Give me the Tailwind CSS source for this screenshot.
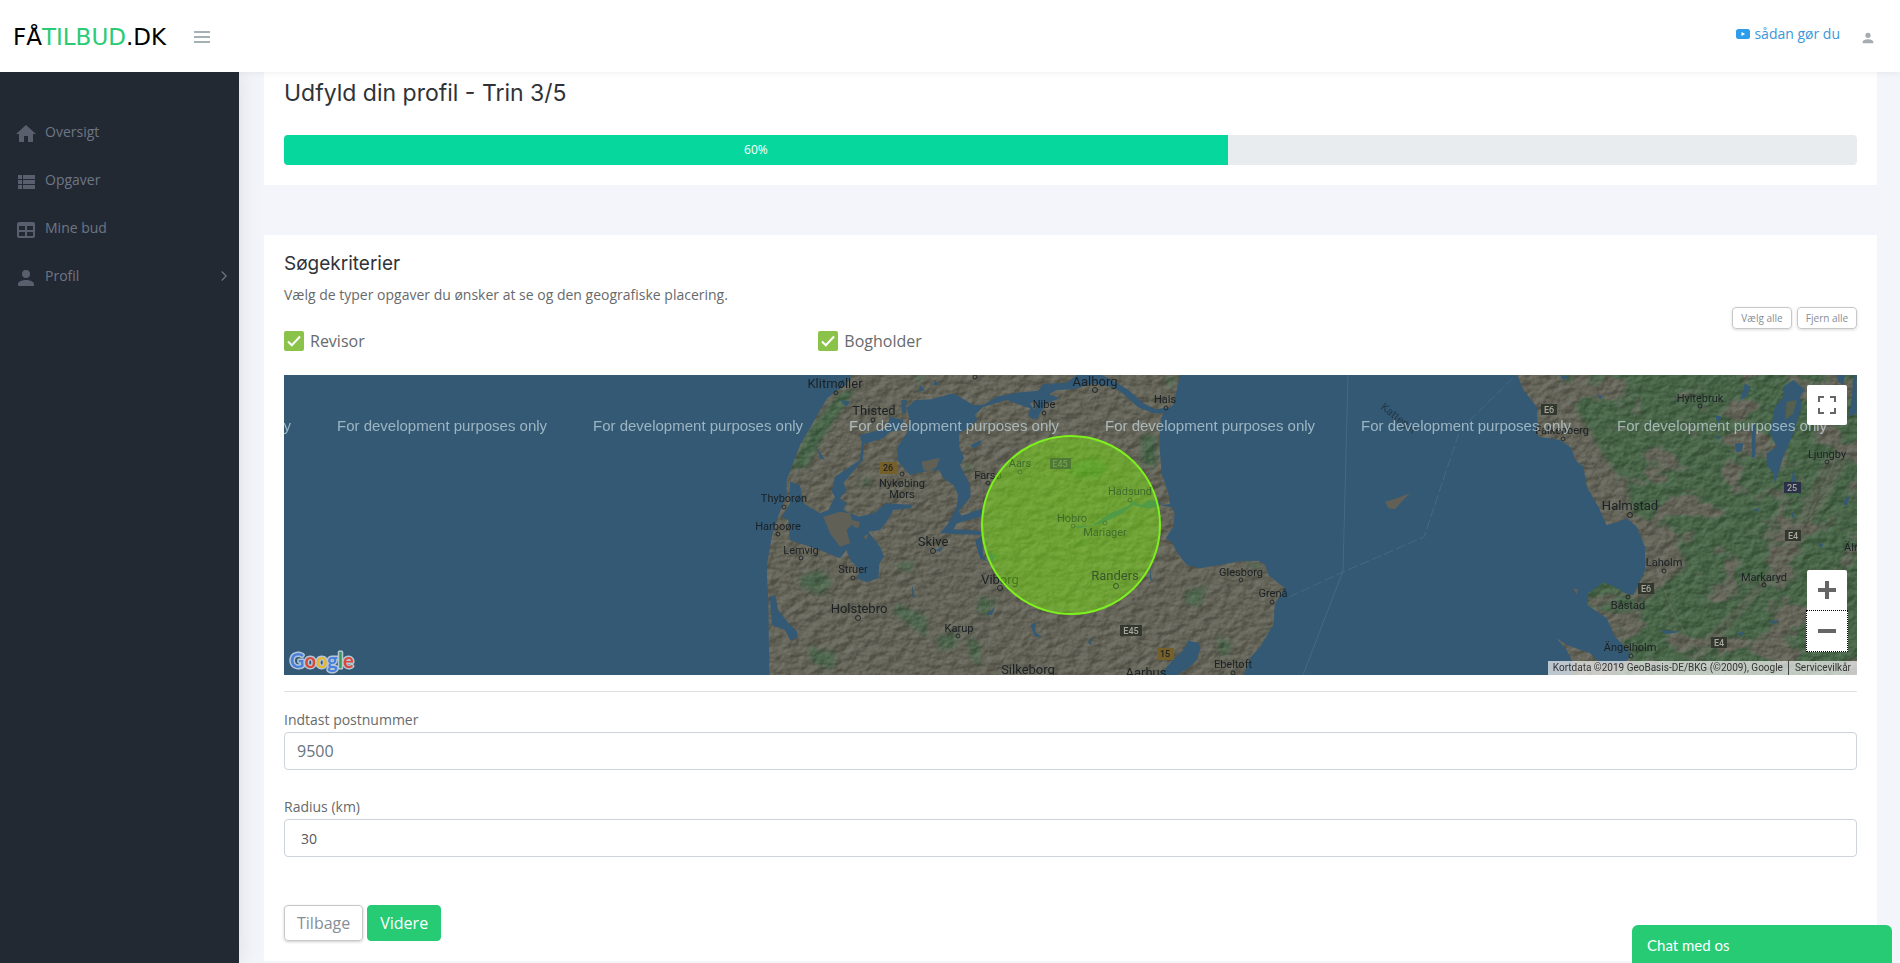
<!DOCTYPE html>
<html lang="da">
<head>
    <meta charset="UTF-8">
    <meta name="viewport" content="width=device-width, initial-scale=1.0">
    <title>FåTilbud.dk - Udfyld din profil</title>
    <script src="https://cdn.jsdelivr.net/npm/@tailwindcss/browser@4"></script>
</head>
<body class="bg-[#f4f5fa] font-['Open_Sans',sans-serif] text-sm text-[#676a6c] h-screen overflow-hidden flex flex-col">

    <!-- Topbar -->
    <header class="relative z-20 h-[72px] shrink-0 bg-white shadow-[0_1px_6px_rgba(60,70,90,0.08)] flex items-center justify-between pl-[13px] pr-6">
        <div class="flex items-center gap-6 pt-[2px]">
            <a href="#" class="font-['DejaVu_Sans',sans-serif] text-[23px] leading-6 text-black">FÅ<span class="text-[#2bcb75]">TILBUD</span>.DK</a>
            <button type="button" aria-label="Menu" class="w-6 h-6 flex items-center justify-center">
                <svg class="w-4 h-3" viewBox="0 0 16 12" fill="#a3b0b6"><path d="M0 0h16v2H0zM0 5h16v2H0zM0 10h16v2H0z"/></svg>
            </button>
        </div>
        <div class="flex items-center gap-5">
            <a href="#" class="flex items-center gap-1 pb-1 text-[#3c96dc]">
                <svg class="w-[14px] h-[10px]" viewBox="0 0 14 10"><rect width="14" height="10" rx="2.5" fill="#2d9cea"/><path d="M5.5 3v4l3.6-2z" fill="#fff"/></svg>
                sådan gør du
            </a>
            <button type="button" aria-label="Konto" class="pt-1">
                <svg class="w-4 h-4" viewBox="0 0 24 24" fill="#a3adb3"><path d="M12 12a4 4 0 1 0 0-8 4 4 0 0 0 0 8zm0 2c-3 0-8 1.300-8 4v2h16v-2c0-2.700-5-4-8-4z"/></svg>
            </button>
        </div>
    </header>

    <div class="flex flex-1 min-h-0">
        <!-- Sidebar -->
        <nav class="w-[239px] shrink-0 bg-[#222933] text-[#6e7684] pt-9 shadow-[2px_0_20px_rgba(60,70,100,0.12)] z-10">
            <ul>
                <li>
                    <a href="#" class="flex items-center h-12 pl-[14px] gap-[7px]">
                        <svg class="w-6 h-6 mt-1" viewBox="0 0 24 24" fill="#585f6d"><path d="M10 20v-6h4v6h5v-8h3L12 3 2 12h3v8z"/></svg>
                        Oversigt
                    </a>
                </li>
                <li>
                    <a href="#" class="flex items-center h-12 pl-[14px] gap-[7px]">
                        <svg class="w-6 h-6 mt-1" viewBox="0 0 24 24" fill="#585f6d"><path d="M9 5v4h12V5zM9 19h12v-4H9zM9 14h12v-4H9zM4 9h4V5H4zM4 19h4v-4H4zM4 14h4v-4H4z"/></svg>
                        Opgaver
                    </a>
                </li>
                <li>
                    <a href="#" class="flex items-center h-12 pl-[14px] gap-[7px]">
                        <svg class="w-6 h-6 mt-1" viewBox="0 0 24 24" fill="#585f6d" fill-rule="evenodd"><path d="M5 4h14a2 2 0 0 1 2 2v12a2 2 0 0 1-2 2H5a2 2 0 0 1-2-2V6a2 2 0 0 1 2-2zM5 8v4h6V8zM13 8v4h6V8zM5 14v4h6v-4zM13 14v4h6v-4z"/></svg>
                        Mine bud
                    </a>
                </li>
                <li>
                    <a href="#" class="flex items-center h-12 pl-[14px] pr-3 gap-[7px]">
                        <svg class="w-6 h-6 mt-1" viewBox="0 0 24 24" fill="#585f6d"><path d="M12 12a4 4 0 1 0 0-8 4 4 0 0 0 0 8zm0 2c-3 0-8 1.300-8 4v2h16v-2c0-2.700-5-4-8-4z"/></svg>
                        Profil
                        <svg class="w-[6px] h-[10px] ml-auto" viewBox="0 0 6 10" fill="none" stroke="#6e7684" stroke-width="1.300"><path d="M.7.500 5.200 5 .7 9.500"/></svg>
                    </a>
                </li>
            </ul>
        </nav>

        <main class="flex-1 min-w-0 px-[25px] pr-[23px]">
            <!-- Fremskridt -->
            <section class="bg-white px-5 pt-1 pb-5">
                <h1 class="font-[Inter,sans-serif] text-[23px] leading-[34px] text-[#2f3338]">Udfyld din profil - Trin 3/5</h1>
                <div class="mt-[25px] h-[30px] rounded bg-[#e9ecef] overflow-hidden">
                    <div class="h-full bg-[#06d79c] text-white text-xs flex items-center justify-center" style="width: 60%">60%</div>
                </div>
            </section>

            <!-- Søgekriterier -->
            <section class="bg-white mt-[50px] px-5 pt-[17px] pb-5">
                <h2 class="font-[Inter,sans-serif] text-[19px] leading-6 text-[#2f3338]">Søgekriterier</h2>
                <p class="mt-[7px] leading-6">Vælg de typer opgaver du ønsker at se og den geografiske placering.</p>

                <div class="flex justify-end gap-[5px] text-[10px] leading-5 text-[#868e96]">
                    <button type="button" onclick="setAll(true)" class="w-[60px] h-[22px] border border-[#c6c9cc] rounded shadow-[0_1px_3px_rgba(0,0,0,0.15)]">Vælg alle</button>
                    <button type="button" onclick="setAll(false)" class="w-[60px] h-[22px] border border-[#c6c9cc] rounded shadow-[0_1px_3px_rgba(0,0,0,0.15)]">Fjern alle</button>
                </div>

                <div class="grid grid-cols-3 gap-[30px] text-base leading-6 pb-[22px]">
                    <label class="flex items-center gap-[6px]">
                        <span class="relative w-5 h-5">
                            <input type="checkbox" checked class="type-box peer block appearance-none w-5 h-5 rounded-xs border-2 border-[#8a8a8a] checked:border-[#8bc34a] checked:bg-[#8bc34a]">
                            <svg class="absolute inset-0 w-5 h-5 hidden peer-checked:block pointer-events-none" viewBox="0 0 20 20" fill="none" stroke="#fff" stroke-width="2"><path d="M4 10.500 7.800 14.300 16 5.500"/></svg>
                        </span>
                        Revisor
                    </label>
                    <label class="flex items-center gap-[6px]">
                        <span class="relative w-5 h-5">
                            <input type="checkbox" checked class="type-box peer block appearance-none w-5 h-5 rounded-xs border-2 border-[#8a8a8a] checked:border-[#8bc34a] checked:bg-[#8bc34a]">
                            <svg class="absolute inset-0 w-5 h-5 hidden peer-checked:block pointer-events-none" viewBox="0 0 20 20" fill="none" stroke="#fff" stroke-width="2"><path d="M4 10.500 7.800 14.300 16 5.500"/></svg>
                        </span>
                        Bogholder
                    </label>
                </div>

                <!-- Kort -->
                <div class="relative h-[300px] overflow-hidden bg-[#335975]">
                    <svg class="w-full h-full font-[Roboto,sans-serif]" viewBox="0 0 1573 300" preserveAspectRatio="xMidYMid slice" fill="none">
                        <defs>
                            <path id="jutland" d="M335 15 318 45 285 65 262 85 240 120 215 165 180 225 155 290 140 330 140 375 118 430 100 480 90 530 80 590 85 700 88 930H1225L1260 915 1290 880 1330 840 1345 812 1375 818 1382 835 1370 870 1345 895 1310 915V930H1505L1530 865 1560 830 1600 765 1605 700 1635 655 1585 615 1575 585 1555 572 1500 574 1440 585 1380 595 1340 585 1310 545 1295 515 1270 500 1265 520 1280 500 1300 470 1304 430 1296 412 1262 406 1290 402 1285 370 1265 310 1258 220 1262 150 1270 130 1300 105 1310 60 1320 15z"/>
                            <path id="sweden" d="M50 220 70 270 110 320 115 410 180 420 215 445 225 480 250 500 260 560 295 620 320 675 355 665 380 655 410 680 435 740 435 810 415 855 400 885 375 880 345 860 310 847 265 880 262 915 320 955 345 1010 385 1050 390 1075 360 1095 300 1090 270 1060 200 1035 170 1015 200 1050 220 1090 215 1140H1100V220z"/>
                            <clipPath id="land">
                                <use href="#jutland" transform="translate(456 -5) scale(.33333)"/>
                                <use href="#sweden" transform="translate(1216 -75) scale(.33333)"/>
                            </clipPath>
                            <filter id="relief" x="0" y="0" width="100%" height="100%" color-interpolation-filters="sRGB">
                                <feTurbulence type="fractalNoise" baseFrequency=".09 .12" numOctaves="3" seed="7"/>
                                <feColorMatrix values="0 0 0 0 0  0 0 0 0 0  0 0 0 0 0  1 0 0 0 0"/>
                                <feDiffuseLighting surfaceScale="3" lighting-color="#fff"><feDistantLight azimuth="225" elevation="30"/></feDiffuseLighting>
                            </filter>
                            <filter id="forest" x="0" y="0" width="100%" height="100%" color-interpolation-filters="sRGB">
                                <feTurbulence type="fractalNoise" baseFrequency=".025 .035" numOctaves="4" seed="12"/>
                                <feColorMatrix values="0 0 0 0 .27  0 0 0 0 .4  0 0 0 0 .28  7 0 0 0 -2.300"/>
                            </filter>
                            <filter id="soft" color-interpolation-filters="sRGB"><feGaussianBlur stdDeviation="6"/></filter>
                        </defs>

                        <!-- Land og terræn -->
                        <g clip-path="url(#land)">
                            <rect width="1573" height="300" fill="#646459"/>
                            <rect x="1260" width="313" height="300" filter="url(#forest)" opacity=".9"/>
                            <g transform="translate(1216 -75) scale(.33333)" fill="#646459" filter="url(#soft)">
                                <path d="M40 210 190 225 230 330 320 480 380 560 400 640 520 700 560 800 480 860 440 900 340 880 250 900 330 950 400 1090 300 1130 200 1130 150 1000 430 850 420 700 300 690 240 500 100 410z"/>
                                <path d="M980 470 1060 450 900 740 600 1080 560 1080 820 800z" opacity=".6"/>
                            </g>
                            <g transform="translate(456 -5) scale(.33333)" fill="#48664a" filter="url(#soft)">
                                <path d="M300 70 345 60 250 200 200 290 150 300 200 190z"/>
                                <path d="M1205 190 1250 200 1250 290 1205 285z" opacity=".9"/>
                                <g opacity=".8">
                                    <path d="M180 620 240 600 280 640 240 675 180 650zM470 580 520 575 520 600 480 600zM470 700 560 740 560 800 460 730zM680 800 720 820 720 890 690 860zM200 830 290 850 280 900 220 880zM590 800 650 790 650 830 600 840z"/>
                                    <path d="M980 290 1060 260 1110 290 1070 330 990 320zM1340 660 1400 650 1380 710 1335 700zM1430 800 1480 820 1460 860 1440 850zM720 680 770 690 740 740 710 720zM1590 770 1600 740 1560 820zM1270 20 1310 20 1290 60z"/>
                                    <path d="M670 280 700 290 690 310zM360 330 400 330 380 350zM750 540 790 560 760 580zM1000 520 1040 510 1030 530zM1510 580 1560 580 1560 600zM520 20 560 15 540 40z"/>
                                </g>
                            </g>
                            <rect width="1573" height="300" filter="url(#relief)" opacity=".35" class="mix-blend-soft-light"/>
                            <g stroke="#77766c" opacity=".45">
                                <path d="M815 15C800 70 780 110 782 160S810 220 830 260L860 300M484 180C510 210 560 240 580 300M700 100C690 160 720 220 700 300M1255 15C1290 60 1310 100 1345 140S1370 220 1410 270L1440 300M1560 60C1540 120 1500 200 1420 280"/>
                            </g>
                        </g>

                        <!-- Limfjorden, fjorde og søer -->
                        <g transform="translate(456 -5) scale(.33333)" fill="#335975">
                            <path d="M500 115 525 90 575 88 640 70 700 105 730 105 770 80 830 68 895 62 910 42 980 38 1010 15H1085L1130 38 1165 60 1210 100 1245 118 1290 112 1290 130 1240 130 1195 112 1150 72 1120 52 1060 40 1000 58 950 60 905 85 870 100 890 130 880 150 865 135 870 115 800 90 730 110 705 135 712 150 680 178 657 190 658 230 672 265 660 285 690 345 692 380 655 425 665 437 728 415 725 440 650 460 640 478 690 480 728 485 725 495 650 492 600 490 625 460 650 410 655 375 640 345 610 325 598 300 550 305 510 315 475 275 470 235 500 190 510 150z"/>
                            <path d="M450 140 490 150 485 180 450 185 430 205 372 222 368 270 355 285 310 340 320 360 300 385 320 400 310 420 355 440 400 430 440 400 520 405 510 415 460 420 440 455 420 480 385 485 420 530 432 560 418 580 415 625 380 637 350 625 360 600 330 570 320 540 300 565 240 540 150 510 145 450 125 440 150 400 150 335 180 345 190 400 240 430 265 420 285 380 275 365 285 320 330 290 360 270 365 220 360 195 440 175z"/>
                            <path d="M250 440 300 425 330 430 340 460 320 480 330 520 300 530 270 490z" fill="#606057"/>
                            <path d="M335 450 360 455 355 475 340 470zM545 275 600 263 590 290 570 305 550 300zM370 500 385 490 380 510z" fill="#606057"/>
                            <path d="M90 680 105 675 115 720 145 760 172 785 170 805 150 810 135 780 95 765zM232 235 255 270 240 265zM585 30 600 45 580 45zM540 45 555 60 535 65zM485 90 500 90 498 130 485 130zM300 90 330 95 320 110zM690 225 725 210 720 225 700 235zM705 510 725 500 730 560 745 575 720 565zM745 545 765 560 755 580zM585 540 610 530 600 545zM872 765 888 755 885 785 905 800 885 800zM515 640 525 685 518 680zM740 735 765 710 755 735zM1050 800 1055 825 1045 820zM1230 590 1235 630 1255 640 1230 630zM895 60 880 140 890 150 900 130 920 100 960 85z"/>
                            <path d="M1000 470 1060 465 1110 430 1165 408 1180 392 1205 405 1225 390 1250 392 1262 400 1255 412 1215 415 1180 405 1140 435 1080 462 1020 475z"/>
                            <path d="M1935 395 1970 385 2010 370 1995 385 1965 418 1945 415z" fill="#606057"/>
                        </g>
                        <g transform="translate(1216 -75) scale(.33333)" fill="#335975">
                            <path d="M850 260 880 240 915 270 900 290 905 320 880 400 850 470 825 550 820 520 800 495 800 460 830 440 810 400 825 320 850 290z"/>
                            <path d="M860 305 890 300 880 340 855 360z" fill="#55604f"/>
                            <path d="M1010 225 1035 225 1030 255 1015 245zM1045 350 1070 340 1070 225 1060 225 1055 300zM735 250 750 260 740 290 720 300zM645 345 665 350 655 375zM705 430 730 430 725 455 708 455zM755 380 768 370 765 470 755 475zM880 500 888 545 875 550zM1035 595 1050 590 1040 615 1030 615zM875 630 885 655 875 650zM760 628 778 625 770 637zM955 725 970 735 960 745zM480 990 540 995 500 1003zM805 965 840 960 820 972zM180 225 205 230 190 242zM290 285 310 288 300 297zM710 1000 730 995 725 1010zM645 405 660 410 655 420z"/>
                            <path d="M218 865 235 868 230 882z" fill="#606057"/>
                        </g>

                        <!-- Færgeruter -->
                        <g stroke="#54748a" opacity=".6">
                            <path d="M1064 0 1059 196 1019 300"/>
                            <path d="M1005 222 1059 197 1140 162 1176 55 1232 0" stroke-dasharray="10 3"/>
                        </g>

                        <!-- Vejskilte -->
                        <g font-size="9" font-weight="500" text-anchor="middle" fill="#a6a69d">
                            <rect x="836" y="250" width="22" height="11" fill="#33382f"/><text x="847" y="259">E45</text>
                            <rect x="1257" y="29" width="16" height="11" fill="#33382f"/><text x="1265" y="38">E6</text>
                            <rect x="1500" y="107" width="17" height="11" fill="#293048"/><text x="1508" y="116">25</text>
                            <rect x="1501" y="155" width="16" height="11" fill="#33382f"/><text x="1509" y="164">E4</text>
                            <rect x="1354" y="208" width="16" height="11" fill="#33382f"/><text x="1362" y="217">E6</text>
                            <rect x="1427" y="262" width="16" height="11" fill="#33382f"/><text x="1435" y="271">E4</text>
                            <g fill="#222">
                                <rect x="596" y="87" width="17" height="12" fill="#75602a"/><text x="604" y="96">26</text>
                                <rect x="873" y="273" width="17" height="12" fill="#75602a"/><text x="881" y="282">15</text>
                            </g>
                        </g>

                        <!-- Bynavne -->
                        <g fill="#1b2124" text-anchor="middle">
                            <g font-size="13">
                                <text x="551" y="13">Klitmøller</text>
                                <text x="590" y="40">Thisted</text>
                                <text x="811" y="11">Aalborg</text>
                                <text x="649" y="171">Skive</text>
                                <text x="575" y="238">Holstebro</text>
                                <text x="744" y="299">Silkeborg</text>
                                <text x="862" y="302">Aarhus</text>
                                <text x="1346" y="135">Halmstad</text>
                                <text x="716" y="209">Viborg</text>
                            </g>
                            <g font-size="11">
                                <text x="760" y="33">Nibe</text>
                                <text x="881" y="28">Hals</text>
                                <text x="618" y="112">Nykøbing</text>
                                <text x="618" y="123">Mors</text>
                                <text x="500" y="127">Thyborøn</text>
                                <text x="494" y="155">Harboøre</text>
                                <text x="517" y="179">Lemvig</text>
                                <text x="569" y="198">Struer</text>
                                <text x="675" y="257">Karup</text>
                                <text x="704" y="104">Farsø</text>
                                <text x="957" y="201">Glesborg</text>
                                <text x="989" y="222">Grenå</text>
                                <text x="949" y="293">Ebeltoft</text>
                                <text x="1416" y="27">Hyltebruk</text>
                                <text x="1278" y="59">Falkenberg</text>
                                <text x="1543" y="83">Ljungby</text>
                                <text x="1380" y="191">Laholm</text>
                                <text x="1480" y="206">Markaryd</text>
                                <text x="1344" y="234">Båstad</text>
                                <text x="1346" y="276">Ängelholm</text>
                                <text x="1579" y="176">Älmhult</text>
                            </g>
                            <text x="1115" y="47" font-size="11" opacity=".6" transform="rotate(38 1115 43)">Kattegat</text>
                        </g>
                        <g stroke="#22282a" stroke-width="1">
                            <circle cx="552" cy="18" r="2"/><circle cx="589" cy="45" r="2"/><circle cx="811" cy="15" r="2.500"/>
                            <circle cx="760" cy="38" r="2"/><circle cx="882" cy="33" r="2"/><circle cx="618" cy="99" r="2"/>
                            <circle cx="500" cy="132" r="2"/><circle cx="494" cy="159" r="2"/><circle cx="517" cy="183" r="2"/>
                            <circle cx="569" cy="203" r="2"/><circle cx="649" cy="176" r="2.500"/><circle cx="574" cy="243" r="2.500"/>
                            <circle cx="674" cy="261" r="2"/><circle cx="704" cy="108" r="2"/><circle cx="716" cy="213" r="2.500"/>
                            <circle cx="957" cy="205" r="2"/><circle cx="988" cy="227" r="2"/>
                            <circle cx="949" cy="298" r="2"/><circle cx="691" cy="2" r="2"/><circle cx="1416" cy="31" r="2"/>
                            <circle cx="1279" cy="64" r="2"/><circle cx="1543" cy="87" r="2"/><circle cx="1346" cy="140" r="2.500"/>
                            <circle cx="1380" cy="196" r="2"/><circle cx="1480" cy="210" r="2"/><circle cx="1344" cy="222" r="2"/>
                            <circle cx="1347" cy="281" r="2"/>
                        </g>

                        <!-- Søgeradius -->
                        <circle cx="787" cy="150" r="89" fill="#7fff00" fill-opacity=".4" stroke="#7df01e" stroke-width="2"/>
                        <g font-size="11" text-anchor="middle" fill="#3f6b29">
                            <rect x="766" y="83" width="21" height="11" fill="#4f7a35"/><text x="776" y="92" font-size="9" fill="#7da658">E45</text>
                            <text x="736" y="92">Aars</text>
                            <text x="846" y="120">Hadsund</text>
                            <text x="788" y="147">Hobro</text>
                            <text x="821" y="161">Mariager</text>
                            <text x="831" y="205" font-size="13" fill="#38562a">Randers</text>
                        </g>
                        <g stroke="#4b7c2e"><circle cx="736" cy="97" r="2"/><circle cx="846" cy="125" r="2"/><circle cx="789" cy="151" r="2"/><circle cx="821" cy="148" r="2"/><circle cx="832" cy="211" r="2.500" stroke="#38562a"/></g>

                        <!-- Vandmærke -->
                        <g class="font-['Liberation_Sans',sans-serif]" font-size="15" fill="#c9dbe3" fill-opacity=".7">
                            <text x="-203" y="56">For development purposes only</text>
                            <text x="53" y="56">For development purposes only</text>
                            <text x="309" y="56">For development purposes only</text>
                            <text x="565" y="56">For development purposes only</text>
                            <text x="821" y="56">For development purposes only</text>
                            <text x="1077" y="56">For development purposes only</text>
                            <text x="1333" y="56">For development purposes only</text>
                        </g>
                    </svg>

                    <a href="#" aria-label="Google" class="absolute left-1 bottom-0">
                        <svg class="w-[72px] h-7 font-[Lato,sans-serif]" viewBox="0 0 72 28" font-size="20" font-weight="700" paint-order="stroke" stroke="#b3c6d6" stroke-width="3" stroke-linejoin="round">
                            <text x="2" y="21"><tspan fill="#4a7fdc">G</tspan><tspan fill="#d9483b">o</tspan><tspan fill="#e9b52c">o</tspan><tspan fill="#4a7fdc">g</tspan><tspan fill="#3a9c54">l</tspan><tspan fill="#d9483b">e</tspan></text>
                        </svg>
                    </a>
                    <button type="button" aria-label="Fuld skærm" class="absolute top-[10px] right-[10px] w-10 h-10 bg-white rounded-xs flex items-center justify-center">
                        <svg class="w-[18px] h-[18px]" viewBox="0 0 18 18" fill="#666"><path d="M0 0v6h2V2h4V0zM12 0v2h4v4h2V0zM16 16h-4v2h6v-6h-2zM2 12H0v6h6v-2H2z"/></svg>
                    </button>
                    <div class="absolute right-[9px] bottom-[23px] flex flex-col items-center">
                        <button type="button" aria-label="Zoom ind" class="w-10 h-10 bg-white rounded-t-xs flex items-center justify-center">
                            <svg class="w-[18px] h-[18px]" viewBox="0 0 18 18" fill="#666"><path d="M7 0h4v7h7v4h-7v7H7v-7H0V7h7z"/></svg>
                        </button>
                        <button type="button" aria-label="Zoom ud" class="w-[42px] h-[42px] bg-white border border-dotted border-black flex items-center justify-center">
                            <svg class="w-[18px] h-1" viewBox="0 0 18 4" fill="#666"><path d="M0 0h18v4H0z"/></svg>
                        </button>
                    </div>
                    <div class="absolute right-0 bottom-0 h-[14px] flex items-center bg-[#f5f5f5]/70 font-[Roboto,sans-serif] text-[10px] leading-[14px] text-[#333]">
                        <span class="px-[5px]">Kortdata ©2019 GeoBasis-DE/BKG (©2009), Google</span>
                        <a href="#" class="px-[6px] border-l border-[#444]">Servicevilkår</a>
                    </div>
                </div>

                <hr class="mt-4 border-[#dfe2e5]">

                <label for="zip" class="block mt-4 leading-6">Indtast postnummer</label>
                <input id="zip" type="text" value="9500" class="block w-full h-[38px] px-3 border border-[#ced4da] rounded text-base text-[#667480]">

                <label for="radius" class="block mt-[25px] leading-6">Radius (km)</label>
                <input id="radius" type="text" value="30" class="block w-full h-[38px] px-4 border border-[#ced4da] rounded text-sm text-[#55595c]">

                <div class="mt-12 flex gap-1 text-base leading-6">
                    <button type="button" class="h-9 px-3 border border-[#c9c9cd] rounded text-[#868e96] shadow-[0_1px_3px_rgba(0,0,0,0.2)]">Tilbage</button>
                    <button type="button" class="h-9 px-3 rounded border border-[#26cb74] bg-[#26cb74] text-white">Videre</button>
                </div>
            </section>
        </main>
    </div>

    <!-- Chat -->
    <button type="button" class="fixed z-30 right-2 bottom-0 w-[260px] h-[38px] px-[15px] pt-1 rounded-t-md bg-[#26cb74] text-white text-left font-[Lato,sans-serif] text-[15px]">Chat med os</button>

    <script>
        // Vælg eller fjern alle opgavetyper
        function setAll(checked) {
            document.querySelectorAll(".type-box").forEach(box => box.checked = checked);
        }
    </script>

</body>
</html>
